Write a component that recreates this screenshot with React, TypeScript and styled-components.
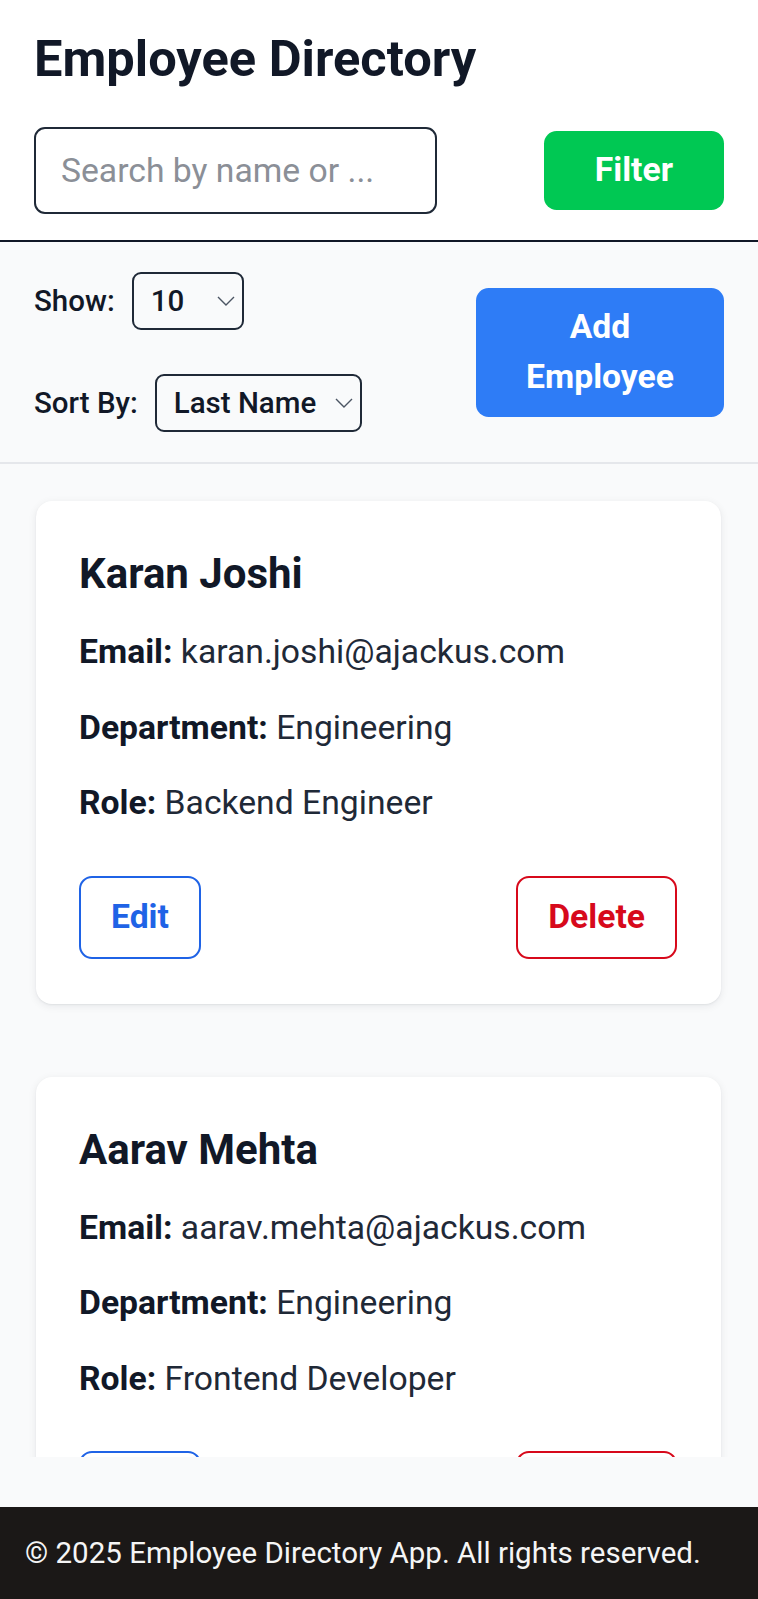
import React from 'react';
import styled, { createGlobalStyle } from 'styled-components';

const GlobalStyle = createGlobalStyle`
  * { box-sizing: border-box; }
  html, body { margin: 0; padding: 0; }
  body {
    font-family: Roboto, "Noto Sans", "Liberation Sans", sans-serif;
    background: #f9fafb;
    color: #111827;
  }
`;

const Page = styled.div`
  height: 100vh;
  display: flex;
  flex-direction: column;
  background: #f9fafb;
`;

const Header = styled.header`
  background: #ffffff;
  padding: 29px 34px 26px;
  border-bottom: 2px solid #111827;
`;

const Title = styled.h1`
  margin: 0 0 38px;
  font-size: 50.6px;
  line-height: 60px;
  font-weight: 700;
  color: #111827;
`;

const SearchRow = styled.div`
  display: flex;
  align-items: center;
  justify-content: space-between;
`;

const SearchInput = styled.input`
  width: 403px;
  height: 87px;
  border: 2px solid #1f2937;
  border-radius: 11px;
  padding: 0 25px;
  font-family: inherit;
  font-size: 33.7px;
  color: #111827;
  background: #ffffff;
  outline: none;
  &::placeholder {
    color: #8b8f97;
    opacity: 1;
  }
`;

const SolidButton = styled.button<{ $bg: string }>`
  background: ${(p) => p.$bg};
  color: #ffffff;
  border: none;
  border-radius: 12.6px;
  font-family: inherit;
  font-weight: 700;
  font-size: 33.7px;
  line-height: 50.5px;
  padding: 14px 51px;
  text-align: center;
`;

const AddButton = styled(SolidButton)`
  width: 248px;
  padding: 14px 24px;
`;

const Controls = styled.section`
  display: flex;
  justify-content: space-between;
  align-items: center;
  padding: 30px 34px;
  border-bottom: 2px solid #e5e7eb;
  background: #f9fafb;
`;

const ControlStack = styled.div`
  display: flex;
  flex-direction: column;
  gap: 44px;
`;

const ControlRow = styled.label`
  display: flex;
  align-items: center;
  gap: 17px;
  font-size: 29.5px;
  font-weight: 500;
  color: #111827;
`;

const SelectWrap = styled.div<{ $width: number }>`
  position: relative;
  width: ${(p) => p.$width}px;
`;

const Select = styled.select`
  appearance: none;
  -webkit-appearance: none;
  width: 100%;
  height: 58px;
  border: 2px solid #1f2937;
  border-radius: 9px;
  background: transparent;
  padding: 0 40px 0 17px;
  font-family: inherit;
  font-size: 29.5px;
  font-weight: 500;
  color: #111827;
  outline: none;
`;

const Chevron = styled.svg`
  position: absolute;
  right: 9px;
  top: 50%;
  transform: translateY(-50%);
  pointer-events: none;
`;

const Main = styled.main`
  flex: 1;
  min-height: 0;
  display: flex;
  flex-direction: column;
  padding-bottom: 50px;
`;

const List = styled.div`
  flex: 1;
  overflow-y: auto;
  padding: 37px 37px 40px 36px;
  display: flex;
  flex-direction: column;
  gap: 73px;
  scrollbar-width: none;
  &::-webkit-scrollbar {
    display: none;
  }
`;

const Card = styled.article`
  flex-shrink: 0;
  background: #ffffff;
  border-radius: 16px;
  box-shadow: 0 2px 8px rgba(17, 24, 39, 0.08), 0 1px 2px rgba(17, 24, 39, 0.06);
  padding: 43px 44px 45px 43px;
`;

const Name = styled.h2`
  margin: 0 0 24px;
  font-size: 42px;
  line-height: 59px;
  font-weight: 700;
  color: #111827;
`;

const Fields = styled.div`
  display: flex;
  flex-direction: column;
  gap: 25px;
`;

const Field = styled.p`
  margin: 0;
  font-size: 33.7px;
  line-height: 50.5px;
  color: #1f2937;
`;

const FieldLabel = styled.strong`
  font-weight: 700;
  color: #111827;
`;

const Actions = styled.div`
  display: flex;
  justify-content: space-between;
  margin-top: 47px;
`;

const OutlineButton = styled.button<{ $color: string }>`
  background: #ffffff;
  border: 2px solid ${(p) => p.$color};
  color: ${(p) => p.$color};
  border-radius: 13px;
  padding: 13px 30px 15px;
  font-family: inherit;
  font-size: 33.7px;
  line-height: 51px;
  font-weight: 700;
`;

const Footer = styled.footer`
  background: #1b1817;
  color: #f5f5f5;
  height: 92px;
  flex-shrink: 0;
  display: flex;
  align-items: center;
  padding: 0 25px;
  font-size: 29.5px;
`;

const employees = [
  { name: 'Karan Joshi', email: 'karan.joshi@ajackus.com', department: 'Engineering', role: 'Backend Engineer' },
  { name: 'Aarav Mehta', email: 'aarav.mehta@ajackus.com', department: 'Engineering', role: 'Frontend Developer' },
  { name: 'Priya Nair', email: 'priya.nair@ajackus.com', department: 'Design', role: 'UI Designer' },
];

const ChevronIcon = () => (
  <Chevron width="18" height="10" viewBox="0 0 18 10">
    <polyline points="1,1 9,9 17,1" fill="none" stroke="#4b5563" strokeWidth="1.4" />
  </Chevron>
);

export default function App() {
  return (
    <Page>
      <GlobalStyle />
      <Header>
        <Title>Employee Directory</Title>
        <SearchRow>
          <SearchInput placeholder="Search by name or ..." />
          <SolidButton $bg="#00c853">Filter</SolidButton>
        </SearchRow>
      </Header>
      <Controls>
        <ControlStack>
          <ControlRow>
            Show:
            <SelectWrap $width={112}>
              <Select defaultValue="10">
                <option value="5">5</option>
                <option value="10">10</option>
                <option value="20">20</option>
                <option value="50">50</option>
              </Select>
              <ChevronIcon />
            </SelectWrap>
          </ControlRow>
          <ControlRow>
            Sort By:
            <SelectWrap $width={207}>
              <Select defaultValue="last">
                <option value="first">First Name</option>
                <option value="last">Last Name</option>
              </Select>
              <ChevronIcon />
            </SelectWrap>
          </ControlRow>
        </ControlStack>
        <AddButton $bg="#2e7cf6">Add Employee</AddButton>
      </Controls>
      <Main>
        <List>
          {employees.map((e) => (
            <Card key={e.email}>
              <Name>{e.name}</Name>
              <Fields>
                <Field>
                  <FieldLabel>Email:</FieldLabel> {e.email}
                </Field>
                <Field>
                  <FieldLabel>Department:</FieldLabel> {e.department}
                </Field>
                <Field>
                  <FieldLabel>Role:</FieldLabel> {e.role}
                </Field>
              </Fields>
              <Actions>
                <OutlineButton $color="#1f63e6">Edit</OutlineButton>
                <OutlineButton $color="#d7091b">Delete</OutlineButton>
              </Actions>
            </Card>
          ))}
        </List>
      </Main>
      <Footer>© 2025 Employee Directory App. All rights reserved.</Footer>
    </Page>
  );
}
